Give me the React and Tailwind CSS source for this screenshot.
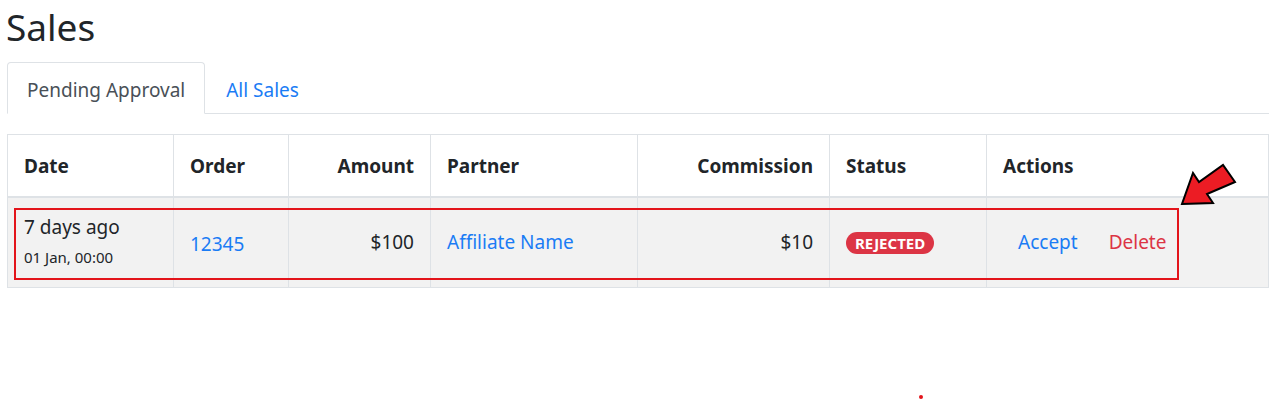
import React from "react";

const cols = [
  { label: "Date", w: "w-[166px]", align: "text-left" },
  { label: "Order", w: "w-[115px]", align: "text-left" },
  { label: "Amount", w: "w-[142px]", align: "text-right" },
  { label: "Partner", w: "w-[207px]", align: "text-left" },
  { label: "Commission", w: "w-[192px]", align: "text-right" },
  { label: "Status", w: "w-[157px]", align: "text-left" },
  { label: "Actions", w: "", align: "text-left" },
];

function Arrow() {
  return (
    <svg
      className="absolute left-[1170px] top-[160px] h-[60px] w-[80px]"
      viewBox="0 0 80 60"
    >
      <polygon
        points="12,44 43,43 37,34 65,22 53,5 29,22 23,13"
        fill="#ec1c24"
        stroke="#000"
        strokeWidth="2"
        strokeLinejoin="miter"
      />
    </svg>
  );
}

export default function App() {
  return (
    <div className="relative h-[401px] w-[1276px] bg-white px-[7px] font-['Noto_Sans','Liberation_Sans',sans-serif] text-[#212529]">
      <h1 className="-ml-px pt-[3px] text-[37px] leading-[48px]">Sales</h1>

      <ul className="mt-[11px] flex border-b border-[#dee2e6] text-[19px]">
        <li className="-mb-px">
          <span className="block rounded-t-[4px] border border-[#dee2e6] border-b-white bg-white px-[19px] pt-[13px] pb-[9px] leading-[28px] text-[#495057]">
            Pending Approval
          </span>
        </li>
        <li className="-mb-px">
          <a className="block border border-transparent px-[20px] pt-[13px] pb-[9px] leading-[28px] text-[#1a7cf5]">
            All Sales
          </a>
        </li>
      </ul>

      <table className="mt-[20px] w-full border-collapse border border-[#dee2e6] text-[19px]">
        <thead>
          <tr className="h-[62px] border-b-2 border-[#dee2e6]">
            {cols.map((c) => (
              <th
                key={c.label}
                className={`${c.w} ${c.align} border-x border-[#dee2e6] px-[16px] pt-[2px] font-bold`}
              >
                {c.label}
              </th>
            ))}
          </tr>
        </thead>
        <tbody>
          <tr className="h-[91px] bg-[#f2f2f2]">
            <td className="border-x border-[#dee2e6] px-[16px] align-middle">
              <div className="leading-[26px]">7 days ago</div>
              <div className="pt-[4px] text-[15px] leading-[26px]">01 Jan, 00:00</div>
            </td>
            <td className="border-x border-[#dee2e6] px-[16px] pt-[4px] text-[#1a7cf5]">12345</td>
            <td className="border-x border-[#dee2e6] px-[16px] text-right">$100</td>
            <td className="border-x border-[#dee2e6] px-[16px] text-[#1a7cf5]">Affiliate Name</td>
            <td className="border-x border-[#dee2e6] px-[16px] text-right">$10</td>
            <td className="border-x border-[#dee2e6] px-[16px]">
              <span className="inline-block rounded-full bg-[#dc3545] px-[9px] text-[15px] font-bold leading-[22px] text-white">
                REJECTED
              </span>
            </td>
            <td className="border-x border-[#dee2e6] px-[16px]">
              <div className="flex gap-[31px] pl-[15px]">
                <a className="text-[#1a7cf5]">Accept</a>
                <a className="text-[#dc3545]">Delete</a>
              </div>
            </td>
          </tr>
        </tbody>
      </table>

      <div className="pointer-events-none absolute left-[14px] top-[208px] h-[72px] w-[1165px] border-2 border-[#e3141b]" />
      <Arrow />
      <div className="absolute left-[919px] top-[395px] h-[4px] w-[4px] rounded-full bg-[#e3141b]" />
    </div>
  );
}
